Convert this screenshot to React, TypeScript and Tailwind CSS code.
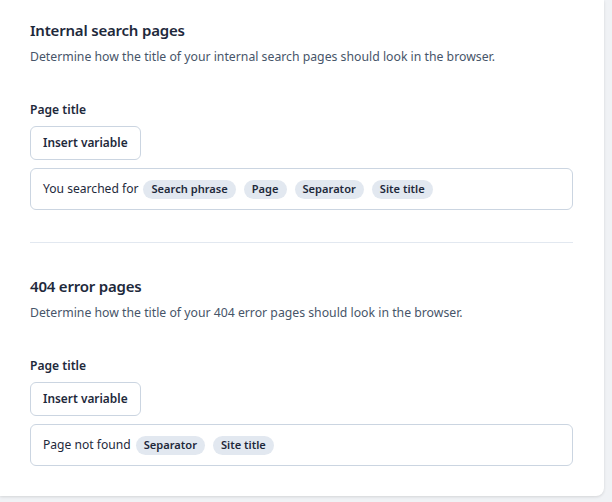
import React from "react";

function Chip({ children }: { children: React.ReactNode }) {
  return (
    <span className="inline-flex items-center h-[19px] px-[8px] rounded-full bg-[#e2e8f0] text-[11.1px] font-semibold text-[#1e293b] leading-none">
      {children}
    </span>
  );
}

function Section({
  title,
  desc,
  prefix,
  chips,
}: {
  title: string;
  desc: string;
  prefix: string;
  chips: string[];
}) {
  return (
    <div className="flex flex-col">
      <h2 className="text-[15px] leading-[24px] font-semibold text-[#1e293b] tracking-[-0.2px]">{title}</h2>
      <p className="mt-[5px] text-[12.25px] leading-[20px] text-[#475569]">{desc}</p>
      <div className="mt-[33px] text-[12.1px] leading-[20px] font-semibold text-[#1e293b]">Page title</div>
      <div className="mt-[6px]">
        <button className="h-[34px] px-[12px] rounded-[6px] border border-[#cbd5e1] bg-white text-[11.9px] font-semibold text-[#1e293b]">
          Insert variable
        </button>
      </div>
      <div className="mt-[8px] h-[42px] rounded-[6px] border border-[#cbd5e1] bg-white flex items-center px-[12px] gap-[8px]">
        <span className="text-[12.1px] text-[#1e293b] mr-[-3px]">{prefix}</span>
        {chips.map((c) => (
          <Chip key={c}>{c}</Chip>
        ))}
      </div>
    </div>
  );
}

export default function App() {
  return (
    <div
      className="w-[612px] h-[502px] bg-[#f0f2f5] overflow-hidden"
      style={{ fontFamily: '"Noto Sans", "Open Sans", sans-serif' }}
    >
      <div className="w-[604px] h-[496px] bg-white rounded-br-[8px] shadow-[0_1px_3px_rgba(0,0,0,0.12)] pl-[30px] pr-[31px] pt-[18px]">
        <Section
          title="Internal search pages"
          desc="Determine how the title of your internal search pages should look in the browser."
          prefix="You searched for"
          chips={["Search phrase", "Page", "Separator", "Site title"]}
        />
        <div className="mt-[32px] mb-[31px] h-px bg-[#e2e8f0]" />
        <Section
          title="404 error pages"
          desc="Determine how the title of your 404 error pages should look in the browser."
          prefix="Page not found"
          chips={["Separator", "Site title"]}
        />
      </div>
    </div>
  );
}
